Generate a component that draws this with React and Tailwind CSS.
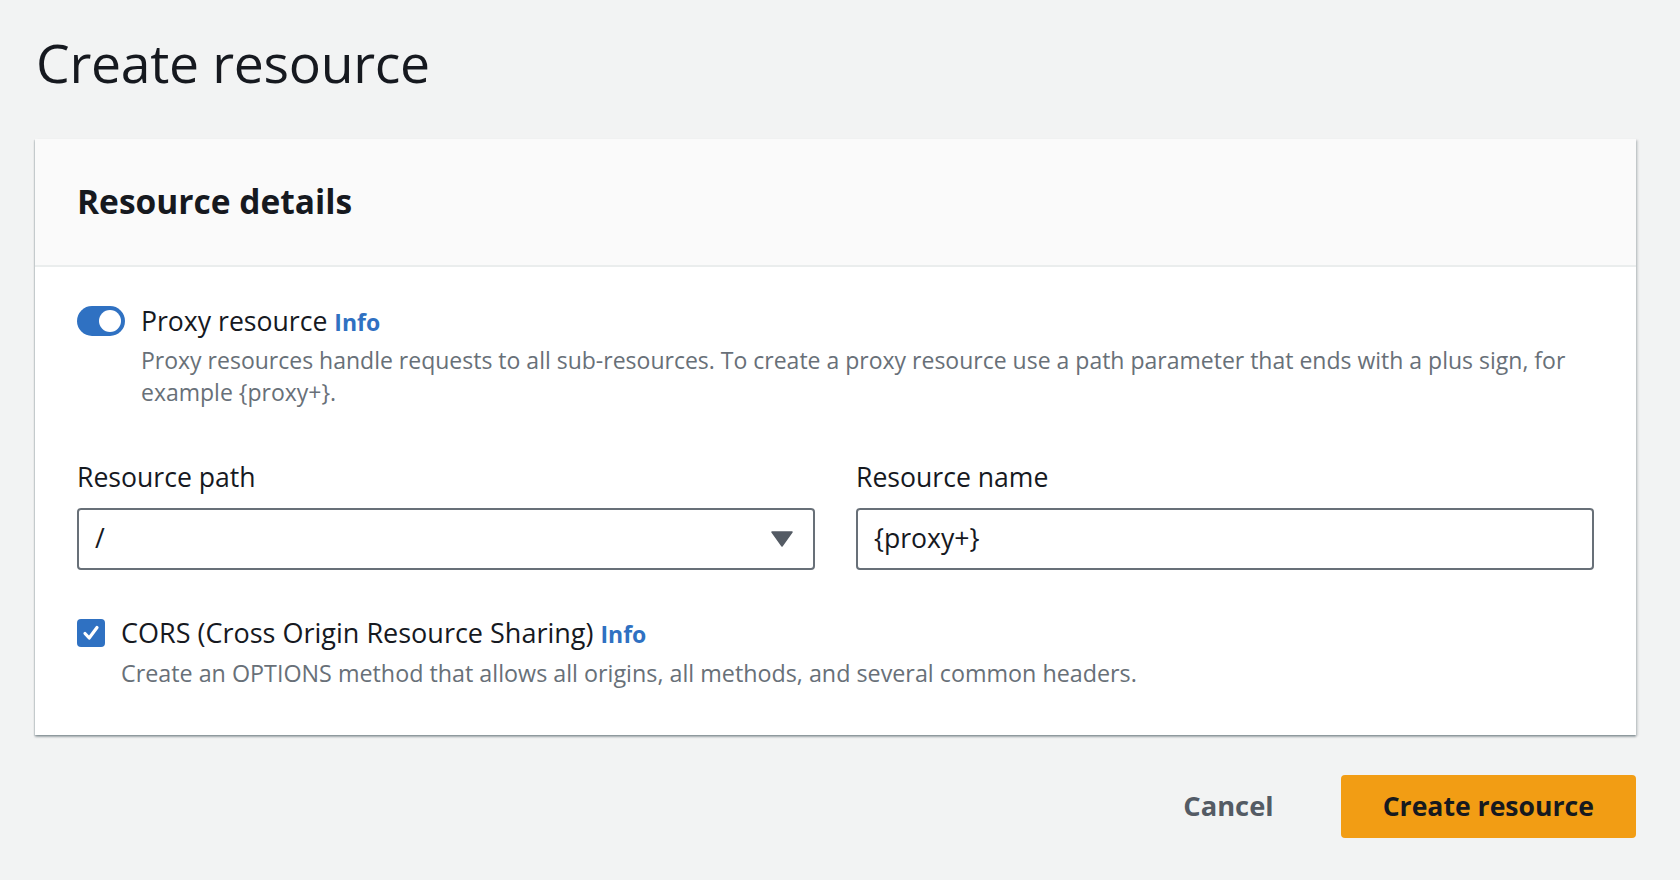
import React from "react";

const font = { fontFamily: '"Open Sans", "Noto Sans", sans-serif' };

const proxyDesc =
  "Proxy resources handle requests to all sub-resources. To create a proxy resource use a path parameter that ends with a plus sign, for example {proxy+}.";

function Toggle() {
  return (
    <div className="relative w-[48px] h-[30px] rounded-full bg-[#2f71c2] shrink-0">
      <div className="absolute right-[4px] top-[4px] w-[22px] h-[22px] rounded-full bg-white" />
    </div>
  );
}

function Checkbox() {
  return (
    <div className="w-[28px] h-[28px] rounded-[4px] bg-[#2f71c2] flex items-center justify-center shrink-0">
      <svg width="20" height="20" viewBox="0 0 20 20" fill="none">
        <path d="M4 10.5 L8.2 15 L16 4.5" stroke="white" strokeWidth="3.2" strokeLinecap="round" strokeLinejoin="round" />
      </svg>
    </div>
  );
}

export default function App() {
  return (
    <div
      className="min-h-screen bg-[#f2f3f3] pl-[35px] pr-[44px] pt-[33px] pb-[41px] text-[#16191f]"
      style={font}
    >
      <h1 className="text-[53.5px] leading-[60px] font-normal tracking-[-0.3px] pl-[1px]">Create resource</h1>

      <div className="mt-[46px] bg-white shadow-[0_2px_2px_0_rgba(0,28,36,0.3),2px_1px_2px_0_rgba(0,28,36,0.12),-1px_1px_1px_0_rgba(0,28,36,0.1)]">
        <div className="bg-[#fafafa] border-b-2 border-[#eaeded] pl-[42px] pr-[42px] pt-[42px] pb-[44px]">
          <h2 className="text-[33.5px] leading-[40px] font-bold">Resource details</h2>
        </div>

        <div className="px-[42px] pt-[37px] pb-[46px]">
          <div className="flex gap-[16px]">
            <div className="pt-[2px]">
              <Toggle />
            </div>
            <div className="flex-1">
              <div className="text-[26.6px] leading-[34px]">
                <span>Proxy resource</span>{" "}
                <span className="text-[23px] font-bold text-[#2f71c2]">Info</span>
              </div>
              <p className="mt-[5px] text-[23px] leading-[32px] text-[#687078]">{proxyDesc}</p>
            </div>
          </div>

          <div className="mt-[52px] grid grid-cols-2 gap-[41px]">
            <div>
              <label className="block text-[26.6px] leading-[34px]">Resource path</label>
              <div className="mt-[14px] h-[62px] border-2 border-[#687078] rounded-[4px] flex items-center pl-[16px] pr-[20px]">
                <span className="flex-1 text-[26.6px]">/</span>
                <svg width="22" height="16" viewBox="0 0 22 16">
                  <path d="M1 1 H21 L11 15 Z" fill="#545b64" stroke="#545b64" strokeWidth="1.5" strokeLinejoin="round" />
                </svg>
              </div>
            </div>
            <div>
              <label className="block text-[26.6px] leading-[34px]">Resource name</label>
              <div className="mt-[14px] h-[62px] border-2 border-[#687078] rounded-[4px] flex items-center pl-[16px] pr-[16px]">
                <span className="text-[26.6px]">{"{proxy+}"}</span>
              </div>
            </div>
          </div>

          <div className="mt-[46px] flex gap-[16px]">
            <div className="pt-[3px]">
              <Checkbox />
            </div>
            <div>
              <div className="text-[27px] leading-[34px]">
                <span>CORS (Cross Origin Resource Sharing)</span>{" "}
                <span className="text-[23px] font-bold text-[#2f71c2]">Info</span>
              </div>
              <p className="mt-[6px] text-[23.3px] leading-[32px] text-[#687078]">
                Create an OPTIONS method that allows all origins, all methods, and several common headers.
              </p>
            </div>
          </div>
        </div>
      </div>

      <div className="mt-[40px] flex justify-end items-center gap-[24px]">
        <button className="h-[63px] px-[43px] text-[27.3px] font-bold text-[#545b64]">Cancel</button>
        <button className="h-[63px] px-[42px] rounded-[4px] bg-[#f29d14] text-[26.6px] font-bold text-[#16191f]">
          Create resource
        </button>
      </div>
    </div>
  );
}
